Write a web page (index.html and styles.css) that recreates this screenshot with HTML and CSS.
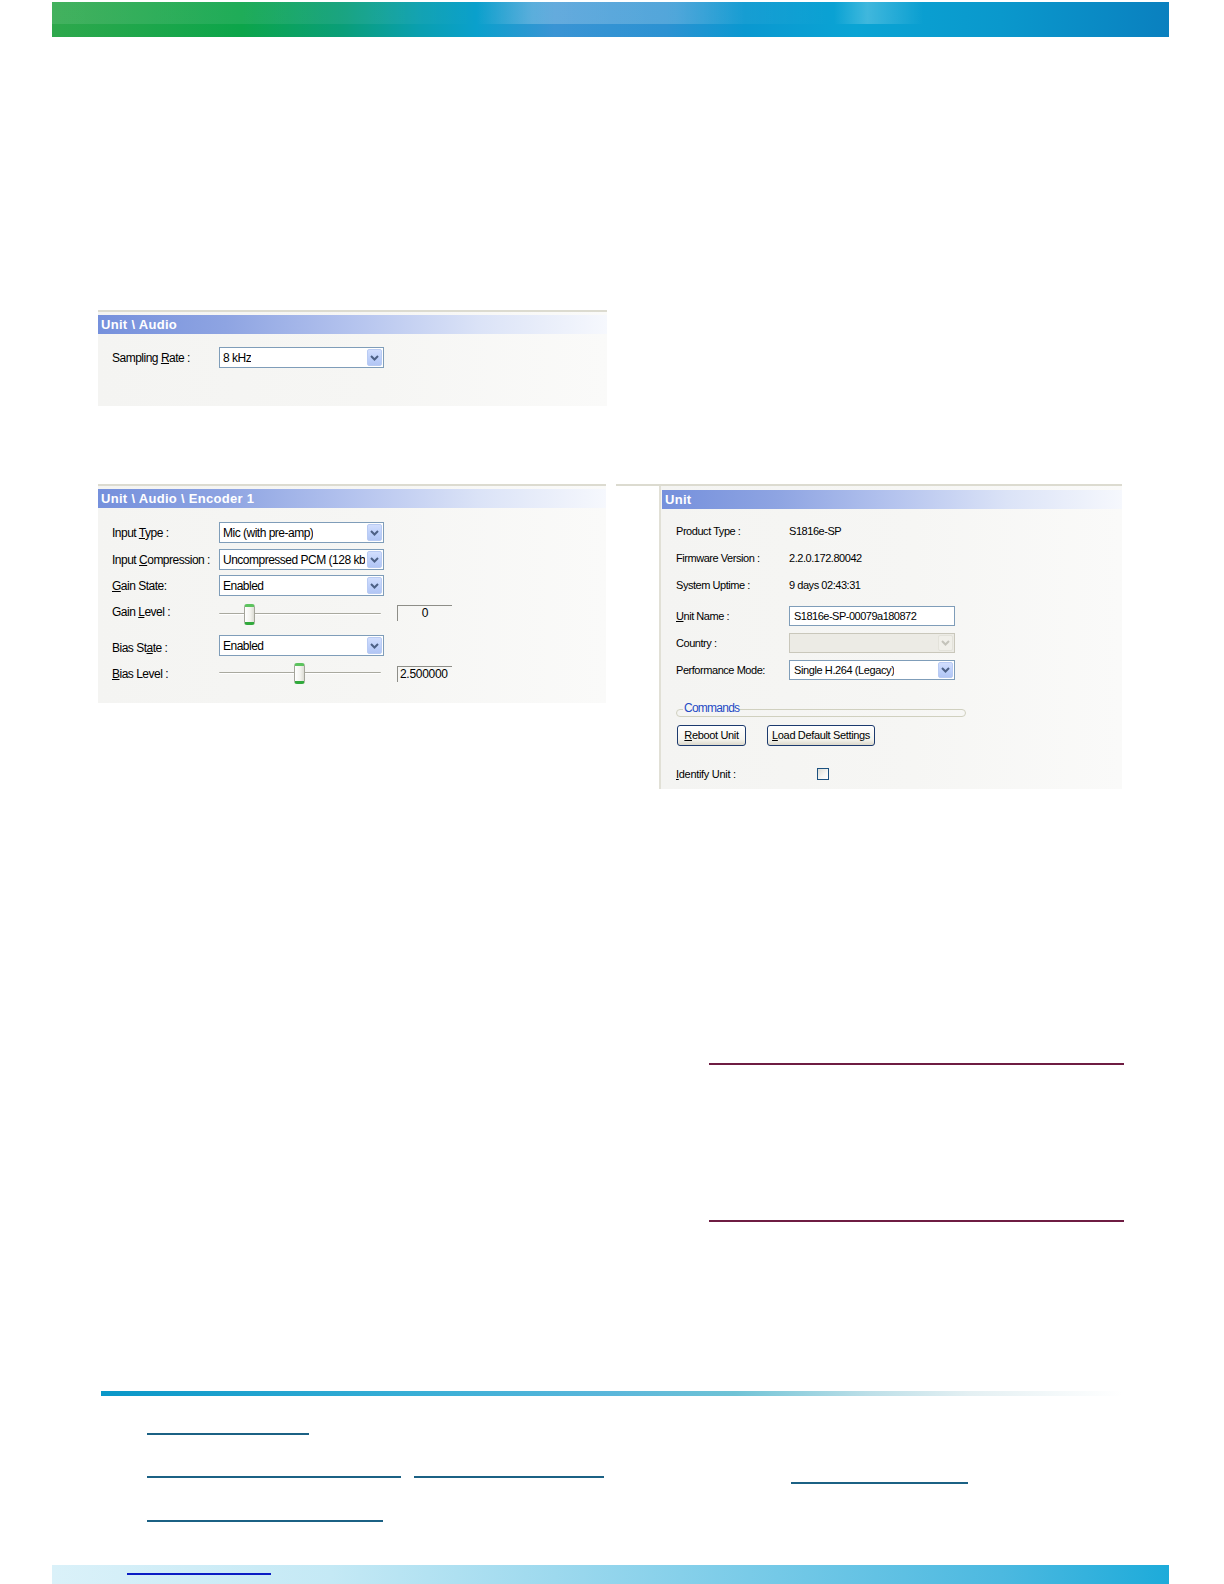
FILE: index.html
```html
<!DOCTYPE html>
<html>
<head>
<meta charset="utf-8">
<title>Unit Audio</title>
<link rel="stylesheet" href="styles.css">
</head>
<body>
<div class="page">
  <div class="banner"><div class="banner-top"></div></div>

  <section class="panel panel-audio">
    <div class="panel-head">Unit \ Audio</div>
    <div class="panel-body audio-body">
      <div class="frow">
        <span class="lbl">Sampling <u>R</u>ate :</span>
        <div class="select"><span class="sel-text">8 kHz</span><span class="sel-btn"><svg width="9" height="6" viewBox="0 0 9 6"><path d="M1 1 L4.5 4.5 L8 1" fill="none" stroke="#4d6185" stroke-width="2"/></svg></span></div>
      </div>
    </div>
  </section>

  <div class="pair">
    <section class="panel panel-enc">
      <div class="panel-head">Unit \ Audio \ Encoder 1</div>
      <div class="panel-body enc-body">
        <div class="frow r1">
          <span class="lbl">Input <u>T</u>ype :</span>
          <div class="select"><span class="sel-text">Mic (with pre-amp)</span><span class="sel-btn"><svg width="9" height="6" viewBox="0 0 9 6"><path d="M1 1 L4.5 4.5 L8 1" fill="none" stroke="#4d6185" stroke-width="2"/></svg></span></div>
        </div>
        <div class="frow r2">
          <span class="lbl">Input <u>C</u>ompression :</span>
          <div class="select"><span class="sel-text">Uncompressed PCM (128 kb</span><span class="sel-btn"><svg width="9" height="6" viewBox="0 0 9 6"><path d="M1 1 L4.5 4.5 L8 1" fill="none" stroke="#4d6185" stroke-width="2"/></svg></span></div>
        </div>
        <div class="frow r3">
          <span class="lbl"><u>G</u>ain State:</span>
          <div class="select"><span class="sel-text">Enabled</span><span class="sel-btn"><svg width="9" height="6" viewBox="0 0 9 6"><path d="M1 1 L4.5 4.5 L8 1" fill="none" stroke="#4d6185" stroke-width="2"/></svg></span></div>
        </div>
        <div class="frow r4">
          <span class="lbl lbl-up">Gain <u>L</u>evel :</span>
          <div class="slider"><span class="track"></span><span class="thumb" style="left:25px"></span></div>
          <span class="valbox center">0</span>
        </div>
        <div class="frow r5">
          <span class="lbl lbl-down">Bias St<u>a</u>te :</span>
          <div class="select"><span class="sel-text">Enabled</span><span class="sel-btn"><svg width="9" height="6" viewBox="0 0 9 6"><path d="M1 1 L4.5 4.5 L8 1" fill="none" stroke="#4d6185" stroke-width="2"/></svg></span></div>
        </div>
        <div class="frow r6">
          <span class="lbl"><u>B</u>ias Level :</span>
          <div class="slider"><span class="track"></span><span class="thumb" style="left:75px"></span></div>
          <span class="valbox">2.500000</span>
        </div>
      </div>
    </section>

    <section class="panel panel-unit">
      <div class="unit-strip"></div>
      <div class="unit-main">
        <div class="panel-head">Unit</div>
        <div class="panel-body unit-body">
          <div class="urow"><span class="ulbl">Product Type :</span><span class="uval">S1816e-SP</span></div>
          <div class="urow"><span class="ulbl">Firmware Version :</span><span class="uval">2.2.0.172.80042</span></div>
          <div class="urow"><span class="ulbl">System Uptime :</span><span class="uval">9 days 02:43:31</span></div>
          <div class="urow urow-tall"><span class="ulbl"><u>U</u>nit Name :</span><span class="uinput">S1816e-SP-00079a180872</span></div>
          <div class="urow"><span class="ulbl">Country :</span>
            <div class="select select-wide disabled"><span class="sel-text"></span><span class="sel-btn"><svg width="9" height="6" viewBox="0 0 9 6"><path d="M1 1 L4.5 4.5 L8 1" fill="none" stroke="#c4c3ba" stroke-width="2"/></svg></span></div>
          </div>
          <div class="urow"><span class="ulbl">Performance Mode:</span>
            <div class="select select-wide"><span class="sel-text">Single H.264 (Legacy)</span><span class="sel-btn"><svg width="9" height="6" viewBox="0 0 9 6"><path d="M1 1 L4.5 4.5 L8 1" fill="none" stroke="#4d6185" stroke-width="2"/></svg></span></div>
          </div>
          <div class="group">
            <span class="group-line"></span>
            <span class="group-title">Commands</span>
          </div>
          <div class="buttons">
            <span class="btn btn-reboot"><u>R</u>eboot Unit</span>
            <span class="btn btn-load"><u>L</u>oad Default Settings</span>
          </div>
          <div class="urow identify"><span class="ulbl"><u>I</u>dentify Unit :</span><span class="check"></span></div>
        </div>
      </div>
    </section>
  </div>

  <div class="rules"></div>

  <div class="footline"></div>

  <div class="links">
    <div class="lrow l1"><span class="ul w160"></span></div>
    <div class="lrow l2"><span class="ul w251"></span><span class="ul w188 gap13"></span><span class="ul w175 gap185 low"></span></div>
    <div class="lrow l3"><span class="ul w234"></span></div>
  </div>

  <div class="band"><span class="band-link"></span></div>
</div>
</body>
</html>
```

FILE: styles.css
```css
html, body {
  margin: 0;
  padding: 0;
  background: #ffffff;
}

.page {
  width: 1224px;
  height: 1584px;
  overflow: hidden;
  font-family: "Liberation Sans", Arial, sans-serif;
  font-size: 12px;
  color: #000;
}

/* top banner */
.banner {
  margin: 2px 0 0 52px;
  width: 1117px;
  height: 35px;
  position: relative;
  background: linear-gradient(90deg,
    #2ea84c 0%, #0ca54a 17%, #0a9e78 26%, #0a9fb0 33%,
    #0aa0cc 38%, #3a94d4 45%, #2c92d2 55%, #0a98d0 62%,
    #0aa4d4 72%, #0a98cc 85%, #0a80bf 100%);
}
.banner-top {
  position: absolute;
  left: 0; top: 0; right: 0;
  height: 22px;
  background: linear-gradient(90deg,
    rgba(255,255,255,0.10) 0%, rgba(255,255,255,0.06) 30%,
    rgba(255,255,255,0.0) 38%, rgba(255,255,255,0.22) 43%,
    rgba(255,255,255,0.18) 56%, rgba(255,255,255,0.05) 62%,
    rgba(255,255,255,0.0) 70%, rgba(255,255,255,0.22) 73%,
    rgba(255,255,255,0.0) 78%, rgba(255,255,255,0.0) 100%);
}

/* generic panel */
.panel {
  background: linear-gradient(90deg, #f4f4f2 0%, #f6f6f4 55%, #fafaf9 100%);
  border-top: 2px solid #dcdbd0;
  box-sizing: border-box;
}
.panel-head {
  height: 19px;
  margin-top: 3px;
  padding-left: 3px;
  line-height: 19px;
  color: #ffffff;
  font-family: "Liberation Sans", Arial, sans-serif;
  font-weight: bold;
  font-size: 13px;
  letter-spacing: 0.3px;
  background: linear-gradient(90deg, #7590dc 0%, #8ea4e2 25%, #b4c3ee 50%, #dbe3f7 75%, #f6f8fd 100%);
}

.frow {
  display: flex;
  align-items: center;
}
.lbl {
  width: 107px;
  letter-spacing: -0.5px;
  white-space: nowrap;
}
.lbl-up { position: relative; top: -3px; }
.lbl-down { position: relative; top: 2px; }

.select {
  width: 165px;
  height: 21px;
  box-sizing: border-box;
  border: 1px solid #7f9db9;
  background: #ffffff;
  display: flex;
  align-items: center;
  justify-content: space-between;
}
.sel-text {
  padding-left: 3px;
  letter-spacing: -0.5px;
  white-space: nowrap;
  overflow: hidden;
}
.sel-btn {
  width: 15px;
  height: 17px;
  margin-right: 1px;
  box-sizing: border-box;
  border: 1px solid #b9cbf3;
  border-radius: 2px;
  background: linear-gradient(180deg, #d2defd 0%, #bccffa 60%, #b2c6f4 100%);
  display: flex;
  align-items: center;
  justify-content: center;
  flex-shrink: 0;
}
.select.disabled {
  background: #ecebe5;
  border-color: #c9c7bb;
}
.select.disabled .sel-btn {
  background: #f0efe9;
  border-color: #e3e2da;
}

/* audio panel */
.panel-audio {
  margin: 273px 0 0 98px;
  width: 509px;
  height: 96px;
}
.audio-body {
  padding: 13px 0 0 14px;
}

/* pair row */
.pair {
  display: flex;
  align-items: flex-start;
  gap: 10px;
  margin: 78px 0 0 98px;
}

/* encoder */
.panel-enc {
  width: 508px;
  height: 219px;
}
.enc-body {
  padding: 14px 0 0 14px;
}
.r1, .r2, .r3, .r5 { height: 21px; }
.r2 { margin-top: 6px; }
.r3 { margin-top: 5px; }
.r4 { height: 21px; margin-top: 8px; }
.r5 { margin-top: 10px; }
.r6 { height: 21px; margin-top: 7px; }

.slider {
  width: 162px;
  height: 21px;
  position: relative;
}
.track {
  position: absolute;
  left: 0; right: 0; top: 9px;
  height: 2px;
  border-top: 1px solid #a9a99f;
  border-bottom: 1px solid #ffffff;
  box-sizing: border-box;
  border-radius: 1px;
}
.thumb {
  position: absolute;
  top: 0;
  width: 11px;
  height: 21px;
  box-sizing: border-box;
  border: 1px solid #a4a49a;
  border-top: 3px solid #5cc35e;
  border-bottom: 3px solid #31a93c;
  border-radius: 3px;
  background: linear-gradient(90deg, #ffffff 0%, #f3f3ee 60%, #dcdcd4 100%);
}
.valbox {
  margin-left: 16px;
  width: 55px;
  height: 16px;
  box-sizing: border-box;
  border-top: 1px solid #8e8e88;
  border-left: 1px solid #8e8e88;
  line-height: 15px;
  padding-left: 2px;
  letter-spacing: -0.3px;
}
.valbox.center { text-align: center; padding-left: 0; }
.r4 .valbox { margin-top: -4px; }

/* unit panel */
.panel-unit {
  width: 506px;
  height: 305px;
  display: flex;
  background: #ffffff;
  font-size: 11px;
}
.unit-strip {
  width: 43px;
  flex-shrink: 0;
  background: #ffffff;
  border-right: 2px solid #e1e0d6;
}
.unit-main {
  flex: 1;
  padding-left: 1px;
  background: linear-gradient(90deg, #f4f4f2 0%, #f6f6f4 55%, #fafaf9 100%);
}
.unit-main .panel-head { margin-top: 4px; }
.unit-body {
  padding: 12px 0 0 14px;
}
.urow {
  display: flex;
  align-items: center;
  height: 20px;
  margin-bottom: 7px;
}
.urow-tall { margin-top: 11px; }
.ulbl {
  width: 113px;
  letter-spacing: -0.45px;
  white-space: nowrap;
}
.uval {
  letter-spacing: -0.45px;
}
.uinput {
  width: 166px;
  height: 20px;
  box-sizing: border-box;
  border: 1px solid #7f9db9;
  background: #ffffff;
  padding-left: 4px;
  line-height: 18px;
  letter-spacing: -0.5px;
}
.select-wide {
  width: 166px;
  height: 20px;
}
.select-wide .sel-text { letter-spacing: -0.4px; padding-left: 4px; }
.select-wide .sel-btn { height: 16px; }

.group {
  position: relative;
  width: 290px;
  height: 14px;
  margin-top: 23px;
}
.group-line {
  position: absolute;
  left: 0; right: 0; top: 6px;
  height: 8px;
  border: 1px solid #d0d0bf;
  border-radius: 5px;
  box-sizing: border-box;
}
.group-title {
  position: absolute;
  left: 7px; top: -2px;
  padding: 0 1px;
  background: #f5f5f3;
  color: #1f4bc5;
  font-size: 12px;
  letter-spacing: -0.75px;
}
.buttons {
  display: flex;
  gap: 21px;
  margin-top: 8px;
  margin-left: 1px;
}
.btn {
  height: 21px;
  box-sizing: border-box;
  border: 1px solid #1c3a6e;
  border-radius: 3px;
  background: linear-gradient(180deg, #ffffff 0%, #f5f4ee 70%, #dcd9cc 100%);
  line-height: 19px;
  text-align: center;
  white-space: nowrap;
  font-size: 11px;
  letter-spacing: -0.35px;
}
.btn-reboot { width: 69px; }
.btn-load { width: 108px; }
.identify { margin-top: 18px; }
.identify .ulbl { width: 141px; letter-spacing: -0.3px; }
.check {
  width: 12px;
  height: 12px;
  box-sizing: border-box;
  border: 1px solid #1c5180;
  background: linear-gradient(135deg, #dcdcd6 0%, #f6f6f3 60%, #ffffff 100%);
}

/* red rules */
.rules {
  margin: 274px 0 0 709px;
  width: 415px;
  height: 159px;
  box-sizing: border-box;
  border-top: 2px solid #6e1c42;
  border-bottom: 2px solid #6e1c42;
}

/* footer */
.footline {
  margin: 169px 0 0 101px;
  width: 1022px;
  height: 5px;
  background: linear-gradient(90deg, #0997c8 0%, #37aed6 30%, #5bb7db 50%, #6fc3d6 62%, #bcdfe8 75%, #e4f0f3 85%, #ffffff 100%);
}
.links {
  padding-left: 147px;
}
.lrow {
  display: flex;
  align-items: flex-start;
}
.l1 { margin-top: 37px; }
.l2 { margin-top: 41px; }
.l3 { margin-top: 36px; }
.ul {
  display: block;
  height: 2px;
  background: #1b6184;
}
.w160 { width: 162px; }
.w251 { width: 254px; }
.w188 { width: 190px; }
.w175 { width: 177px; }
.w234 { width: 236px; }
.gap13 { margin-left: 13px; }
.gap185 { margin-left: 187px; }
.low { margin-top: 6px; }

.band {
  margin: 43px 0 0 52px;
  width: 1117px;
  height: 40px;
  position: relative;
  background: linear-gradient(90deg, #daf1f9 0%, #c4e9f5 25%, #9dd9ee 45%, #74c9e7 65%, #4cb9e0 85%, #1dabda 100%);
}
.band-link {
  position: absolute;
  left: 75px;
  top: 8px;
  width: 144px;
  height: 2px;
  background: #0a1cc4;
}
```
